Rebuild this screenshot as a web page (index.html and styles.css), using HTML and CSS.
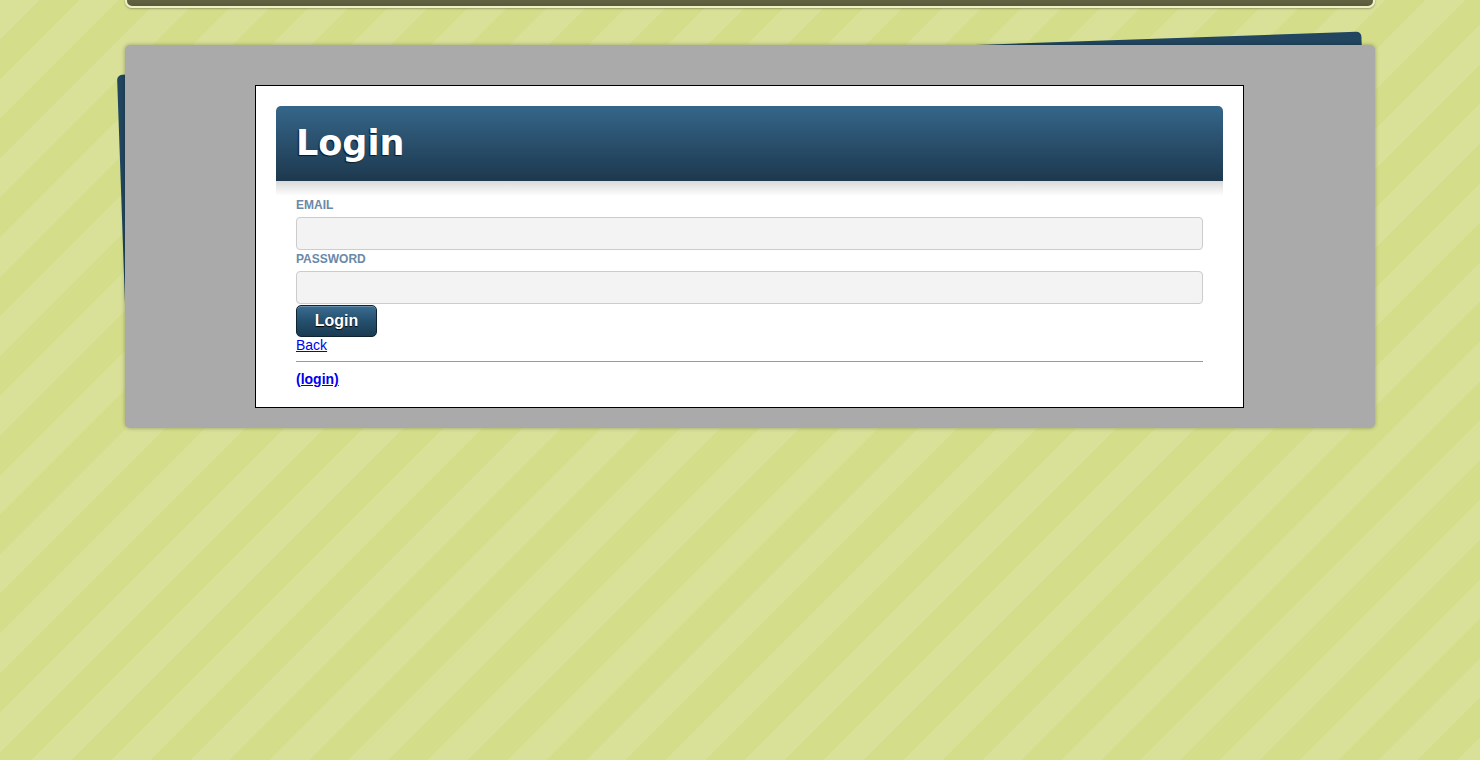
FILE: index.html
```html
<!DOCTYPE html>
<html lang="en">
<head>
<meta charset="utf-8">
<title>Login</title>
<link rel="stylesheet" href="styles.css">
</head>
<body>
<div class="topbar"></div>
<div class="stage">
  <div class="card-back"></div>
  <div class="panel">
    <div class="box">
      <div class="header"><h1 class="title">Login</h1></div>
      <div class="shade"></div>
      <form class="form">
        <label class="label" for="email">EMAIL</label>
        <input class="field" id="email" type="text">
        <label class="label" for="password">PASSWORD</label>
        <input class="field" id="password" type="password">
        <button class="btn" type="button">Login</button>
        <a class="link" href="#">Back</a>
        <hr class="rule">
        <a class="link strong" href="#">(login)</a>
      </form>
    </div>
  </div>
</div>
</body>
</html>
```
FILE: styles.css
```css
html, body {
  margin: 0;
  padding: 0;
}
body {
  min-height: 760px;
  font-family: "Liberation Sans", Arial, sans-serif;
  background-color: #d5de8b;
  background-image: repeating-linear-gradient(135deg, #d9e097 0 28px, #d4de8a 28px 56px);
}
.topbar {
  margin: -10px 0 0 125px;
  width: 1246px;
  height: 14px;
  border: 2px solid #eef1c6;
  border-radius: 0 0 7px 7px;
  background: linear-gradient(#6c6f4e, #585a3a);
  box-shadow: 0 1px 2px rgba(0,0,0,0.3);
}
.stage {
  position: relative;
  margin: 37px 0 0 125px;
  width: 1250px;
}
.card-back {
  position: absolute;
  left: -8px;
  top: 30px;
  width: 1245px;
  height: 300px;
  background: #22465f;
  border-radius: 5px;
  transform: rotate(-2deg);
  transform-origin: 0 0;
}
.panel {
  position: relative;
  background: #aaaaaa;
  border-radius: 5px;
  box-shadow: 0 0 4px rgba(0,0,0,0.3);
  padding: 40px 131px 20px 130px;
}
.box {
  background: #fff;
  border: 1px solid #000;
  padding: 20px;
}
.header {
  height: 75px;
  border-radius: 5px 5px 0 0;
  background: linear-gradient(#356689, #1d384e);
  display: flex;
  align-items: center;
  padding: 0 20px;
}
.title {
  margin: 0 0 2px;
  color: #fff;
  font-family: "DejaVu Sans", sans-serif;
  font-weight: bold;
  font-size: 35px;
  line-height: 40px;
  text-shadow: -1px 1px 1px #0c1a25;
}
.shade {
  height: 15px;
  background: linear-gradient(#d9d9d9, #ffffff);
}
.form {
  padding: 0 20px;
  display: flex;
  flex-direction: column;
  align-items: flex-start;
}
.label {
  display: block;
  font-size: 12px;
  line-height: 18px;
  font-weight: bold;
  color: #6b88a8;
  margin-bottom: 3px;
}
.field {
  box-sizing: border-box;
  width: 100%;
  height: 33px;
  margin: 0;
  border: 1px solid #cccccc;
  border-radius: 4px;
  background: #f3f3f3;
  font-size: 14px;
}
.btn {
  box-sizing: border-box;
  width: 81px;
  height: 32px;
  margin: 1px 0 0;
  padding: 0;
  border: 1px solid #0f2433;
  border-radius: 5px;
  background: linear-gradient(#3b6c91, #25506e 50%, #1a3a52);
  box-shadow: inset 0 1px 0 rgba(255,255,255,0.25);
  color: #fff;
  font-family: "Liberation Sans", Arial, sans-serif;
  font-weight: bold;
  font-size: 16px;
  text-shadow: 0 1px 1px #000;
}
.link {
  color: #0000ee;
  font-size: 14px;
  line-height: 16px;
  text-decoration: underline;
}
.strong {
  font-weight: bold;
}
.rule {
  align-self: stretch;
  border: 0;
  border-top: 1px solid #999;
  margin: 8px 0 9px;
  height: 0;
}
```
